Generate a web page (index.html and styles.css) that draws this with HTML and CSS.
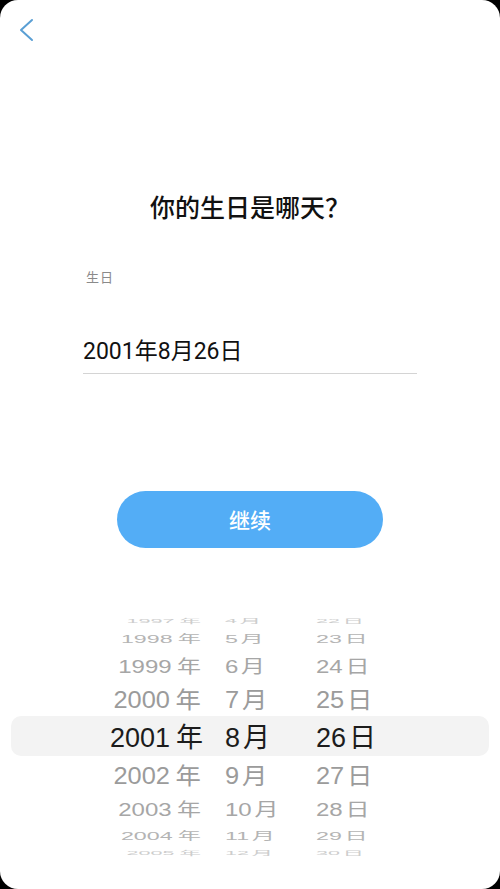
FILE: index.html
```html
<!DOCTYPE html>
<html lang="zh-CN">
<head>
    <meta charset="UTF-8">
    <title>生日</title>
    <link rel="stylesheet" href="styles.css">
</head>
<body>
<div class="screen">
    <div class="top">
        <a class="back">
            <svg width="16" height="24" viewBox="0 0 16 24">
                <path d="M14 2 L3 12 L14 22" fill="none" stroke="#5a9fd4" stroke-width="2" stroke-linecap="round" stroke-linejoin="round"/>
            </svg>
        </a>
    </div>

    <h1 class="title">你的生日是哪天？</h1>

    <div class="field">
        <div class="label">生日</div>
        <div class="value">2001年8月26日</div>
    </div>

    <a class="btn">继续</a>

    <div class="picker">
        <div class="row d4"><span class="y">1997<i>年</i></span><span class="m">4<i>月</i></span><span class="d">22<i>日</i></span></div>
        <div class="row d3"><span class="y">1998<i>年</i></span><span class="m">5<i>月</i></span><span class="d">23<i>日</i></span></div>
        <div class="row d2"><span class="y">1999<i>年</i></span><span class="m">6<i>月</i></span><span class="d">24<i>日</i></span></div>
        <div class="row d1"><span class="y">2000<i>年</i></span><span class="m">7<i>月</i></span><span class="d">25<i>日</i></span></div>
        <div class="row d0"><span class="y">2001<i>年</i></span><span class="m">8<i>月</i></span><span class="d">26<i>日</i></span></div>
        <div class="row d1"><span class="y">2002<i>年</i></span><span class="m">9<i>月</i></span><span class="d">27<i>日</i></span></div>
        <div class="row d2"><span class="y">2003<i>年</i></span><span class="m">10<i>月</i></span><span class="d">28<i>日</i></span></div>
        <div class="row d3"><span class="y">2004<i>年</i></span><span class="m">11<i>月</i></span><span class="d">29<i>日</i></span></div>
        <div class="row d4"><span class="y">2005<i>年</i></span><span class="m">12<i>月</i></span><span class="d">30<i>日</i></span></div>
    </div>
</div>
</body>
</html>
```

FILE: styles.css
```css
*{
    margin:0;
    padding:0;
    box-sizing: border-box;
    text-decoration: none;
}
html, body{
    background: #000;
}
body{
    font-family: "Roboto", "Noto Sans CJK SC", sans-serif;
    color: #111;
}
.screen{
    width:500px;
    height:889px;
    background: #fff;
    border-radius: 18px;
    overflow: hidden;
}

/* 顶部返回 */
.top{
    height:60px;
    padding: 18px 0 0 18px;
}
.back{
    display: inline-block;
    cursor: pointer;
}
.back svg{
    display: block;
}

.title{
    margin-top: 129px;
    font-family: "Noto Sans CJK SC", sans-serif;
    font-size: 25px;
    font-weight: 500;
    line-height: 35px;
    text-align: center;
    color: #111;
}

/* 生日输入 */
.field{
    margin: 44px 83px 0;
}
.label{
    font-family: "Noto Sans CJK SC", sans-serif;
    font-size: 13px;
    line-height: 18px;
    color: #8a8a8a;
    padding-left: 3px;
    letter-spacing: 1px;
}
.value{
    margin-top: 51px;
    font-size: 23px;
    line-height: 30px;
    padding-bottom: 6px;
    border-bottom: 1px solid #d4d4d4;
    color: #111;
}

.btn{
    display: block;
    width: 266px;
    height: 57px;
    margin: 117px auto 0;
    border-radius: 29px;
    background: #53adf6;
    color: #fff;
    font-family: "Noto Sans CJK SC", sans-serif;
    font-size: 21px;
    font-weight: 500;
    line-height: 57px;
    text-align: center;
    cursor: pointer;
}

/* 滚轮选择器 */
.picker{
    margin-top: 66px;
    display: flex;
    flex-direction: column;
    font-family: "Liberation Sans", "Noto Sans CJK SC", sans-serif;
    font-size: 27px;
}
.row{
    display: grid;
    grid-template-columns: 201px 115px 1fr;
    white-space: nowrap;
}
.row span{
    display: block;
}
.row i{
    font-style: normal;
    font-family: "Noto Sans CJK SC", sans-serif;
    margin-left: 3px;
}
.row .y{
    text-align: right;
    transform-origin: right center;
}
.row .y i{
    margin-left: 6px;
}
.row .m{
    padding-left: 24px;
    transform-origin: 24px center;
}
.row .d{
    transform-origin: left center;
}

.d0{
    height: 40px;
    line-height: 40px;
    margin: 0 11px;
    background: #f3f3f3;
    border-radius: 10px;
    grid-template-columns: 192px 113px 1fr;
    color: #1c1c1c;
}
.d0 .m{
    padding-left: 22px;
}
.d1{
    height: 36px;
    line-height: 36px;
    color: #9b9b9b;
}
.d1 span{
    transform: scale(0.94, 0.86);
}
.d2{
    height: 31px;
    line-height: 31px;
    color: #a6a6a6;
}
.d2 span{
    transform: scale(0.89, 0.68);
}
.d3{
    height: 23px;
    line-height: 23px;
    color: #b4b4b4;
}
.d3 span{
    transform: scale(0.86, 0.42);
}
.d4{
    height: 12px;
    line-height: 12px;
    color: #cdcdcd;
}
.d4 span{
    transform: scale(0.8, 0.2);
}
```
